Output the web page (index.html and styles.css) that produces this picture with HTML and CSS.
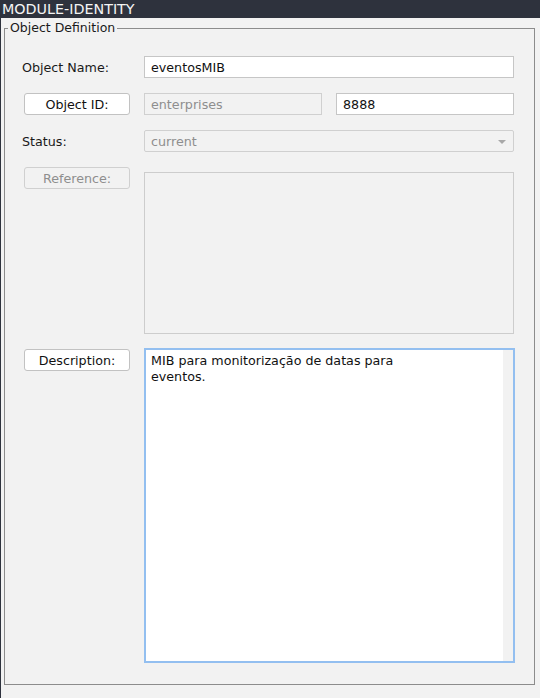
FILE: index.html
```html
<!DOCTYPE html>
<html>
<head>
<meta charset="utf-8">
<link rel="stylesheet" href="styles.css">
</head>
<body>
<div class="titlebar">MODULE-IDENTITY</div>
<div class="main">
  <fieldset class="group">
    <legend class="legend">Object Definition</legend>
    <div class="form">
      <div class="label">Object Name:</div>
      <div class="field">eventosMIB</div>

      <div class="btn">Object ID:</div>
      <div class="pair">
        <div class="field disabled">enterprises</div>
        <div class="field">8888</div>
      </div>

      <div class="label">Status:</div>
      <div class="field disabled combo">current<span class="arrow"></span></div>

      <div class="btn disabled-btn">Reference:</div>
      <div class="area disabled-area"></div>

      <div class="btn">Description:</div>
      <div class="area active-area">
        <div class="area-text">MIB para monitorização de datas para<br>eventos.</div>
        <div class="scroll-track"></div>
      </div>
    </div>
  </fieldset>
</div>
</body>
</html>
```
FILE: styles.css
```css
* { box-sizing: border-box; }
html, body { margin: 0; padding: 0; }
body {
  width: 540px;
  height: 698px;
  background: #f2f2f2;
  font-family: "DejaVu Sans", sans-serif;
  font-size: 12.7px;
  color: #1a1a1a;
  overflow: hidden;
}
.titlebar {
  height: 18px;
  background: #2e323d;
  color: #f4f4f4;
  font-size: 14.3px;
  line-height: 18px;
  padding-left: 2px;
}
.main {
  border-left: 1px solid #2e323d;
  height: 680px;
  padding: 3px 0 0 3px;
}
.group {
  margin: 0;
  width: 531px;
  border: 1px solid #8c8c8c;
  padding: 0 0 21px 3px;
}
.legend {
  padding: 0 2px;
  line-height: 14px;
  font-size: 12.5px;
  color: #1a1a1a;
}
.form {
  margin-left: 14px;
  margin-top: 21px;
  width: 493px;
  display: grid;
  grid-template-columns: 122px 371px;
  row-gap: 15px;
  align-items: start;
}
.label {
  height: 22px;
  line-height: 23px;
}
.field {
  width: 370px;
  height: 22px;
  background: #fff;
  border: 1px solid #c6c6c6;
  line-height: 21px;
  padding-left: 6px;
  color: #111;
}
.field.disabled {
  background: #f2f2f2;
  border-color: #d0d0d0;
  color: #8e8e8e;
}
.combo {
  position: relative;
  border-radius: 2px;
}
.arrow {
  position: absolute;
  right: 7px;
  top: 9px;
  width: 0;
  height: 0;
  border-left: 4px solid transparent;
  border-right: 4px solid transparent;
  border-top: 4px solid #a8a8a8;
}
.pair {
  display: grid;
  grid-template-columns: 178px 178px;
  column-gap: 14px;
}
.pair .field { width: 178px; }
.btn {
  margin-left: 2px;
  width: 106px;
  height: 22px;
  background: #fff;
  border: 1px solid #c2c2c2;
  border-radius: 3px;
  text-align: center;
  line-height: 21px;
  color: #111;
}
.btn.disabled-btn {
  background: #f2f2f2;
  border-color: #d0d0d0;
  color: #8e8e8e;
}
.disabled-area {
  width: 370px;
  margin-top: 5px;
  height: 162px;
  border: 1px solid #cdcdcd;
  background: #f2f2f2;
}
.active-area {
  width: 371px;
  margin-top: -1px;
  height: 315px;
  border: 2px solid #93bff0;
  background: #fff;
  display: flex;
}
.area-text {
  flex: 1;
  padding: 3px 0 0 5px;
  line-height: 16px;
  color: #111;
}
.scroll-track {
  width: 10px;
  background: #f2f2f2;
}
```
